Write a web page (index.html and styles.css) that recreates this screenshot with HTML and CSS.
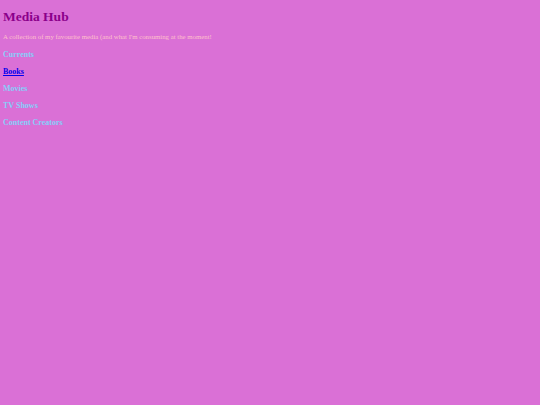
FILE: index.html
```html
<!DOCTYPE html>
<html>
<head>
<meta charset="utf-8">
<title>Media Hub</title>
<link rel="stylesheet" href="styles.css">
</head>
<body>
<h1 class="title">Media Hub</h1>
<p class="intro">A collection of my favourite media (and what I'm consuming at the moment!</p>
<nav class="menu">
  <h3 class="item">Currents</h3>
  <h3 class="item"><a class="link" href="#">Books</a></h3>
  <h3 class="item">Movies</h3>
  <h3 class="item">TV Shows</h3>
  <h3 class="item">Content Creators</h3>
</nav>
</body>
</html>
```
FILE: styles.css
```css
html { background: #da70d6; }
body {
  margin: 3px;
  font-family: "Liberation Serif", serif;
  background: #da70d6;
}
.title {
  color: #8b008b;
  font-size: 13.5px;
  margin: 6px 0 0;
  line-height: 16px;
}
.intro {
  color: #ffc0cb;
  font-size: 6.8px;
  margin: 8px 0 0;
  line-height: 8px;
}
.menu {
  display: flex;
  flex-direction: column;
  gap: 7px;
  margin-top: 9px;
}
.item {
  color: #87cefa;
  font-size: 8px;
  margin: 0;
  line-height: 10px;
}
.link { color: #0000ee; }
```
